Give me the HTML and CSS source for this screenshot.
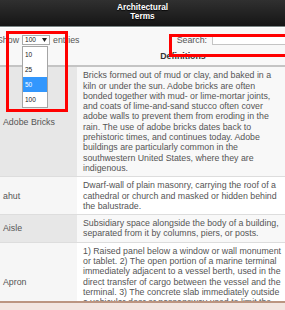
FILE: index.html
```html
<!DOCTYPE html>
<html lang="en">
<head>
  <meta charset="UTF-8" />
  <meta name="viewport" content="width=device-width, initial-scale=1.0" />
  <title>Architectural Terms</title>
  <link rel="stylesheet" href="styles.css">
</head>
<body>
  <header class="bar">
    <h1>Architectural<br>Terms</h1>
  </header>

  <div class="list">
    <div class="controls">
      <div class="length">
        Show
        <span class="select">100
          <svg class="caret" width="5" height="4" viewBox="0 0 5 4"><path d="M0 0h5L2.5 4z" fill="#222"/></svg>
        </span>
        entries
      </div>
      <div class="search">
        Search:
        <span class="input"></span>
      </div>
    </div>

    <table class="terms">
      <thead>
        <tr>
          <th class="term"></th>
          <th class="def">Definitions</th>
        </tr>
      </thead>
      <tbody>
        <tr class="odd">
          <td class="term">Adobe Bricks</td>
          <td class="def">Bricks formed out of mud or clay, and baked in a kiln or under the sun. Adobe bricks are often bonded together with mud- or lime-mortar joints, and coats of lime-and-sand stucco often cover adobe walls to prevent them from eroding in the rain. The use of adobe bricks dates back to prehistoric times, and continues today. Adobe buildings are particularly common in the southwestern United States, where they are indigenous.</td>
        </tr>
        <tr class="even">
          <td class="term">ahut</td>
          <td class="def">Dwarf-wall of plain masonry, carrying the roof of a cathedral or church and masked or hidden behind the balustrade.</td>
        </tr>
        <tr class="odd">
          <td class="term">Aisle</td>
          <td class="def">Subsidiary space alongside the body of a building, separated from it by columns, piers, or posts.</td>
        </tr>
        <tr class="even">
          <td class="term">Apron</td>
          <td class="def">1) Raised panel below a window or wall monument or tablet. 2) The open portion of a marine terminal immediately adjacent to a vessel berth, used in the direct transfer of cargo between the vessel and the terminal. 3) The concrete slab immediately outside a vehicular door or passageway used to limit the wear on the adjacent paving.</td>
        </tr>
      </tbody>
    </table>

    <!-- open length menu and the two highlight boxes sit over the table -->
    <ul class="options">
      <li>10</li>
      <li>25</li>
      <li class="active">50</li>
      <li>100</li>
    </ul>
    <div class="mark mark-length"></div>
    <div class="mark mark-search"></div>
  </div>

  <footer class="bottom"></footer>
</body>
</html>
```

FILE: styles.css
```css
html, body {
  margin: 0;
  height: 100%;
  overflow: hidden;
}
body {
  font-family: 'Liberation Sans', Arial, sans-serif;
  font-size: 8.8px;
  line-height: 10.3px;
  color: #555;
  background: #f8f8f8;
}
.bar {
  height: 27px;
  box-sizing: border-box;
  padding-top: 2.5px;
  background: linear-gradient(#303030, #151515);
  border-bottom: 1px solid #7a8585;
  text-align: center;
}
.bar h1 {
  margin: 0;
  font-size: 8.3px;
  line-height: 9.4px;
  font-weight: bold;
  color: #fff;
  text-shadow: 0 1px 1px #000;
}
.list {
  position: relative;
  border-top: 1px solid #fff;
}
.controls {
  display: flex;
  justify-content: space-between;
  align-items: center;
  height: 16px;
  padding-top: 4px;
  margin: 0 -12px 0 -3px;
}
.length,
.search {
  display: flex;
  align-items: center;
  gap: 3px;
}
.search {
  gap: 5px;
}
.select {
  display: flex;
  align-items: center;
  justify-content: space-between;
  width: 22px;
  height: 8px;
  padding: 0 2px;
  border: 1px solid #a9a9a9;
  background: #fff;
  color: #222;
  font-size: 6.5px;
}
.input {
  width: 83px;
  height: 8px;
  border: 1px solid #c4c4c4;
  background: #fff;
}
.options {
  position: absolute;
  left: 22px;
  top: 18px;
  width: 24px;
  margin: 0;
  padding: 0;
  list-style: none;
  background: #fff;
  border: 1px solid #a5a5a5;
  color: #222;
  font-size: 6.5px;
}
.options li {
  height: 15px;
  line-height: 15px;
  padding-left: 2px;
}
.options li.active {
  background: #3297fd;
  color: #fff;
}
.mark {
  position: absolute;
  border: 3px solid #f00;
}
.mark-length {
  left: 6px;
  top: 3px;
  width: 56px;
  height: 75px;
}
.mark-search {
  left: 169px;
  top: 6px;
  width: 117px;
  height: 17px;
}
.terms {
  width: 285px;
  border-collapse: collapse;
  table-layout: fixed;
}
.terms th {
  padding: 3px 2px 4px 6px;
  font-weight: bold;
  color: #333;
  text-align: center;
  border-bottom: 2px solid #c4c4c4;
}
.terms td {
  padding: 3px 2px 3px 6px;
  vertical-align: middle;
  border-bottom: 1px solid #ddd;
}
.terms .term {
  width: 72px;
  padding-left: 3px;
}
.terms .def {
  width: 200px;
}
tr.odd td.term { background: #e7e7e7; }
tr.odd td.def { background: #f8f8f8; }
tr.even td.term { background: #f6f6f6; }
tr.even td.def { background: #fff; }
.bottom {
  position: fixed;
  left: 0;
  right: 0;
  bottom: 0;
  height: 7px;
  border-top: 2px solid #bb9581;
  background: #f2e5e0;
}
```
